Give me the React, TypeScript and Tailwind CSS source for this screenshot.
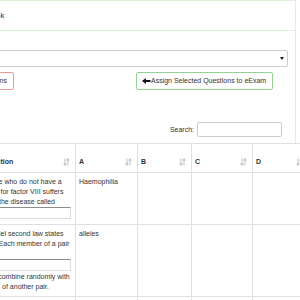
import React from "react";

const SortIcon = () => (
  <svg width="7" height="8" viewBox="0 0 7 8" className="absolute right-[5px] bottom-[6px]">
    <path d="M2 0.5V7M0.6 5.4L2 7.2L3.4 5.4" stroke="#c6c6c6" strokeWidth="1.1" fill="none" />
    <path d="M5 7.5V1M3.6 2.6L5 0.8L6.4 2.6" stroke="#c6c6c6" strokeWidth="1.1" fill="none" />
  </svg>
);

const AnswerInput = () => (
  <div className="h-[12px] mb-[1px] border border-[#dcdcdc] border-t-[#8c8c8c] bg-white" />
);

const headers = ["#", "Question", "A", "B", "C", "D", "E"];

const rows = [
  {
    n: "1",
    before: ["Those who do not have a", "gene for factor VIII suffers", "from the disease called"],
    gap: false,
    after: [] as string[],
    a: "Haemophilia",
  },
  {
    n: "2",
    before: ["Mendel second law states", "that: Each member of a pair"],
    gap: true,
    after: ["may combine randomly with", "some of another pair."],
    a: "alleles",
  },
  {
    n: "3",
    before: ["The basic unit of heredity is"],
    gap: false,
    after: [] as string[],
    a: "gene",
  },
];

const cell = "border-r border-b border-[#e0e0e0] pt-[4px] pb-[4px] pl-[3px] pr-[4px]";

export default function App() {
  return (
    <div className="w-[300px] h-[300px] overflow-hidden bg-white font-[Liberation_Sans,Arial,sans-serif] text-[7px] leading-[10px] text-[#333]">
      <div className="-ml-[300px] w-[596px]">
        {/* Panel */}
        <div className="border border-b-0 border-[#dff0d8]">
          <div className="h-[30px] border-b border-[#dff0d8] flex items-center pl-[251px] text-[8px] text-[#2d3440]">
            Question Bank
          </div>
          <div className="px-[7px] pt-[19px] pb-[6px]">
            <div className="h-[17px] border border-[#cccccc] rounded-[2px] flex items-center pl-[6px] pr-[3px]">
              <span className="flex-1">-- Select eExam --</span>
              <svg width="4" height="3" viewBox="0 0 4 3">
                <path d="M0 0H4L2 3Z" fill="#222" />
              </svg>
            </div>

            <div className="mt-[5px] flex items-center">
              <button className="ml-[186px] w-[120px] h-[18px] border border-[#e39b9b] rounded-[2px] flex items-center justify-end pr-[6px] bg-white">
                Delete Selected Questions
              </button>
              <button className="ml-[122px] h-[18px] border border-[#94d394] rounded-[2px] flex items-center pl-[5px] pr-[6px] bg-white">
                <svg width="9" height="6" viewBox="0 0 9 6">
                  <path d="M0 3L4 0V2H8.5V4H4V6Z" fill="#111" />
                </svg>
                <span>Assign Selected Questions to eExam</span>
              </button>
            </div>

            <div className="mt-[32px] flex items-center justify-end pr-[6px]">
              <span className="mr-[3px]">Search:</span>
              <div className="w-[85px] h-[15px] border border-[#cccccc] rounded-[2px]" />
            </div>
          </div>
        </div>

        {/* Table */}
        <div className="w-max grid grid-cols-[280px_96px_62px_54px_61px_56px_120px] border-t border-[#e0e0e0]">
          {headers.map((h) => (
            <div
              key={h}
              className="relative h-[29px] border-r border-b border-[#e0e0e0] flex items-end pl-[3px] pb-[5px] font-bold"
            >
              {h}
              <SortIcon />
            </div>
          ))}

          {rows.map((r) => (
            <React.Fragment key={r.n}>
              <div className={cell}>{r.n}</div>
              <div className={cell}>
                {r.before.map((l) => (
                  <div key={l} className="whitespace-nowrap">{l}</div>
                ))}
                {r.gap && <div className="h-[10px]" />}
                <AnswerInput />
                {r.after.length > 0 && (
                  <div className="mt-[1px]">
                    {r.after.map((l) => (
                      <div key={l} className="whitespace-nowrap">{l}</div>
                    ))}
                  </div>
                )}
              </div>
              <div className={cell}>{r.a}</div>
              <div className={cell} />
              <div className={cell} />
              <div className={cell} />
              <div className={cell} />
            </React.Fragment>
          ))}
        </div>
      </div>
    </div>
  );
}
